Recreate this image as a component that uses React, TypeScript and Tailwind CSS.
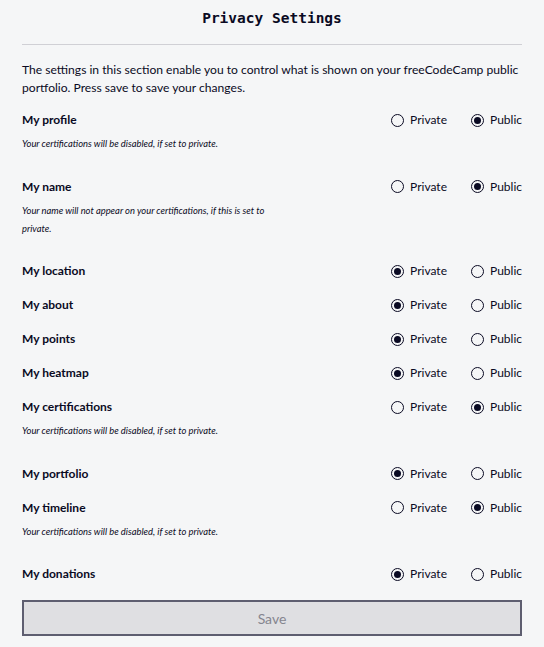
import React from 'react';

type Row = { label: string; value: 'private' | 'public'; note?: string };

const rows: Row[] = [
  { label: 'My profile', value: 'public', note: 'Your certifications will be disabled, if set to private.' },
  { label: 'My name', value: 'public', note: 'Your name will not appear on your certifications, if this is set to private.' },
  { label: 'My location', value: 'private' },
  { label: 'My about', value: 'private' },
  { label: 'My points', value: 'private' },
  { label: 'My heatmap', value: 'private' },
  { label: 'My certifications', value: 'public', note: 'Your certifications will be disabled, if set to private.' },
  { label: 'My portfolio', value: 'private' },
  { label: 'My timeline', value: 'public', note: 'Your certifications will be disabled, if set to private.' },
  { label: 'My donations', value: 'private' },
];

function Radio({ checked, label }: { checked: boolean; label: string }) {
  return (
    <label className="flex items-center gap-[6px]">
      <span className="flex h-[13px] w-[13px] items-center justify-center rounded-full border border-[#0a0a23]">
        {checked && <span className="h-[7px] w-[7px] rounded-full bg-[#0a0a23]" />}
      </span>
      <span>{label}</span>
    </label>
  );
}

export default function App() {
  return (
    <div className="min-h-screen bg-[#f5f6f7] text-[#0a0a23] font-['Lato','Noto_Sans',sans-serif]">
      <div className="mx-[22px] pt-[6px]">
        <h2 className="text-center text-[14.5px] leading-[24px] font-bold font-['DejaVu_Sans_Mono','Liberation_Mono',monospace]">
          Privacy Settings
        </h2>
        <hr className="mt-[14px] border-t border-[#d0d0d5]" />
        <p className="mt-[16px] text-[12.1px] leading-[18px]">
          The settings in this section enable you to control what is shown on your freeCodeCamp public portfolio. Press save to save your changes.
        </p>

        <div className="mt-[14px] flex flex-col gap-[16px]">
          {rows.map((r) => (
            <div key={r.label} className="flex items-start justify-between">
              <div className="w-[250px]">
                <div className="text-[12px] leading-[18px] font-bold">{r.label}</div>
                {r.note && (
                  <p className="mt-[6px] mb-[8.5px] text-[9.4px] leading-[18px] italic">{r.note}</p>
                )}
              </div>
              <div className="flex items-center gap-[24px] text-[12px] leading-[18px]">
                <Radio checked={r.value === 'private'} label="Private" />
                <Radio checked={r.value === 'public'} label="Public" />
              </div>
            </div>
          ))}
        </div>

        <button className="mt-[17px] h-[36px] w-full border-2 border-[#5e5e70] bg-[#dfdfe2] text-[14px] text-[#85858f]">
          Save
        </button>
      </div>
    </div>
  );
}
